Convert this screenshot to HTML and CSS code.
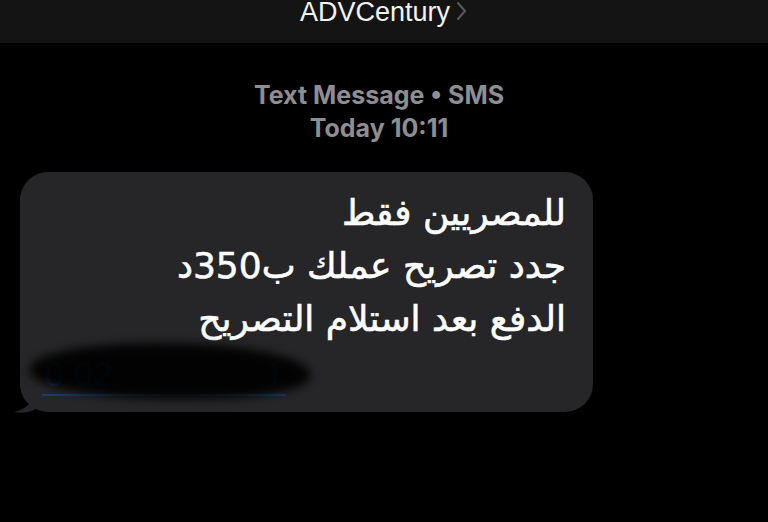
FILE: index.html
```html
<!DOCTYPE html>
<html lang="ar">
<head>
  <meta charset="UTF-8" />
  <title>ADVCentury</title>
  <link rel="stylesheet" href="styles.css">
</head>
<body>
  <header class="top-bar">
    <span class="sender">ADVCentury</span>
    <svg class="chevron" width="12" height="20" viewBox="0 0 12 20"><path d="M2 2 L9 10 L2 18" fill="none" stroke="#5a5a5e" stroke-width="2" stroke-linecap="round" stroke-linejoin="round"/></svg>
  </header>

  <div class="thread">
    <div class="meta">
      <div>Text Message • SMS</div>
      <div>Today 10:11</div>
    </div>

    <div class="bubble">
      <p class="msg" dir="rtl">للمصريين فقط<br>جدد تصريح عملك ب350د<br>الدفع بعد استلام التصريح</p>
      <div class="phone">
        <span class="link">0 02&nbsp;&nbsp;&nbsp;&nbsp;&nbsp;&nbsp;&nbsp;&nbsp;&nbsp;&nbsp;&nbsp;&nbsp;&nbsp;&nbsp;&nbsp;&nbsp;&nbsp;1</span>
        <span class="scribble"></span>
      </div>
      <svg class="tail" width="30" height="26" viewBox="0 0 30 26"><path d="M22 0 C22 12 18 20 2 24 C12 26 22 24 30 16 L30 0 Z" fill="#262628"/></svg>
    </div>
  </div>
</body>
</html>
```

FILE: styles.css
```css
body {
  margin: 0;
  background: #000;
  font-family: "Inter", "Liberation Sans", sans-serif;
  width: 768px;
  height: 522px;
  overflow: hidden;
}

.top-bar {
  background: #141414;
  height: 43px;
  display: flex;
  justify-content: center;
  align-items: flex-start;
  gap: 6px;
}

.sender {
  color: #f2f2f2;
  font-size: 27px;
  line-height: 25px;
  font-family: "Liberation Sans", sans-serif;
}

.chevron {
  margin-top: 1px;
}

.meta {
  color: #8e8e92;
  font-weight: 700;
  font-size: 25px;
  line-height: 33px;
  text-align: center;
  margin-top: 36px;
  padding-right: 10px;
}

.bubble {
  position: relative;
  background: #262628;
  width: 573px;
  height: 240px;
  margin: 27px 0 0 20px;
  border-radius: 28px;
  box-sizing: border-box;
  padding: 14px 27px 0 0;
}

.msg {
  margin: 0;
  color: #fff;
  font-family: "DejaVu Sans", sans-serif;
  font-size: 36px;
  line-height: 53px;
  text-align: right;
  -webkit-text-stroke: 0.6px #fff;
}

.phone {
  position: relative;
  margin: 10px 0 0 18px;
  width: 270px;
  height: 40px;
}

.link {
  color: #1d426f;
  font-size: 32px;
  border-bottom: 2px solid #17406e;
  padding: 0 6px;
}

.scribble {
  position: absolute;
  left: -8px;
  top: -12px;
  width: 280px;
  height: 56px;
  background: #000;
  border-radius: 45% 55% 40% 50%;
  filter: blur(5px);
  opacity: 0.92;
}

.tail {
  position: absolute;
  left: -8px;
  bottom: -2px;
}
```
